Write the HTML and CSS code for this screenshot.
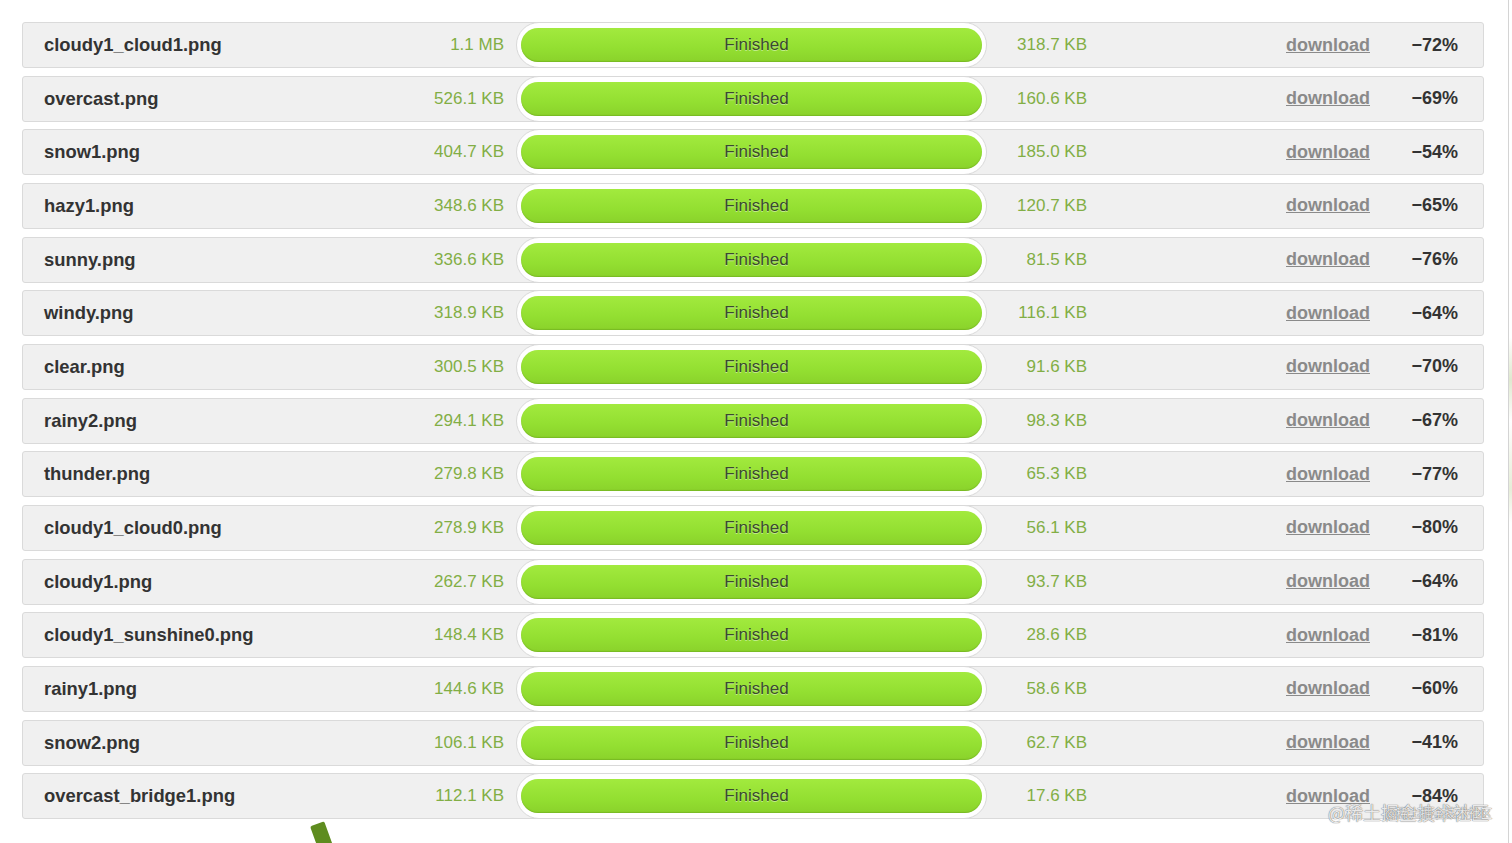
FILE: index.html
```html
<!DOCTYPE html>
<html lang="en">
<head>
    <meta charset="UTF-8">
    <meta name="viewport" content="width=device-width, initial-scale=1.0">
    <title>Compressed files</title>
    <link rel="stylesheet" href="styles.css">
</head>
<body>
<ul class="files">
    <li class="file">
        <span class="name">cloudy1_cloud1.png</span>
        <span class="size">1.1 MB</span>
        <span class="progress"><span class="bar">Finished</span></span>
        <span class="size">318.7 KB</span>
        <a class="download" href="#">download</a>
        <span class="saved">&minus;72%</span>
    </li>
    <li class="file">
        <span class="name">overcast.png</span>
        <span class="size">526.1 KB</span>
        <span class="progress"><span class="bar">Finished</span></span>
        <span class="size">160.6 KB</span>
        <a class="download" href="#">download</a>
        <span class="saved">&minus;69%</span>
    </li>
    <li class="file">
        <span class="name">snow1.png</span>
        <span class="size">404.7 KB</span>
        <span class="progress"><span class="bar">Finished</span></span>
        <span class="size">185.0 KB</span>
        <a class="download" href="#">download</a>
        <span class="saved">&minus;54%</span>
    </li>
    <li class="file">
        <span class="name">hazy1.png</span>
        <span class="size">348.6 KB</span>
        <span class="progress"><span class="bar">Finished</span></span>
        <span class="size">120.7 KB</span>
        <a class="download" href="#">download</a>
        <span class="saved">&minus;65%</span>
    </li>
    <li class="file">
        <span class="name">sunny.png</span>
        <span class="size">336.6 KB</span>
        <span class="progress"><span class="bar">Finished</span></span>
        <span class="size">81.5 KB</span>
        <a class="download" href="#">download</a>
        <span class="saved">&minus;76%</span>
    </li>
    <li class="file">
        <span class="name">windy.png</span>
        <span class="size">318.9 KB</span>
        <span class="progress"><span class="bar">Finished</span></span>
        <span class="size">116.1 KB</span>
        <a class="download" href="#">download</a>
        <span class="saved">&minus;64%</span>
    </li>
    <li class="file">
        <span class="name">clear.png</span>
        <span class="size">300.5 KB</span>
        <span class="progress"><span class="bar">Finished</span></span>
        <span class="size">91.6 KB</span>
        <a class="download" href="#">download</a>
        <span class="saved">&minus;70%</span>
    </li>
    <li class="file">
        <span class="name">rainy2.png</span>
        <span class="size">294.1 KB</span>
        <span class="progress"><span class="bar">Finished</span></span>
        <span class="size">98.3 KB</span>
        <a class="download" href="#">download</a>
        <span class="saved">&minus;67%</span>
    </li>
    <li class="file">
        <span class="name">thunder.png</span>
        <span class="size">279.8 KB</span>
        <span class="progress"><span class="bar">Finished</span></span>
        <span class="size">65.3 KB</span>
        <a class="download" href="#">download</a>
        <span class="saved">&minus;77%</span>
    </li>
    <li class="file">
        <span class="name">cloudy1_cloud0.png</span>
        <span class="size">278.9 KB</span>
        <span class="progress"><span class="bar">Finished</span></span>
        <span class="size">56.1 KB</span>
        <a class="download" href="#">download</a>
        <span class="saved">&minus;80%</span>
    </li>
    <li class="file">
        <span class="name">cloudy1.png</span>
        <span class="size">262.7 KB</span>
        <span class="progress"><span class="bar">Finished</span></span>
        <span class="size">93.7 KB</span>
        <a class="download" href="#">download</a>
        <span class="saved">&minus;64%</span>
    </li>
    <li class="file">
        <span class="name">cloudy1_sunshine0.png</span>
        <span class="size">148.4 KB</span>
        <span class="progress"><span class="bar">Finished</span></span>
        <span class="size">28.6 KB</span>
        <a class="download" href="#">download</a>
        <span class="saved">&minus;81%</span>
    </li>
    <li class="file">
        <span class="name">rainy1.png</span>
        <span class="size">144.6 KB</span>
        <span class="progress"><span class="bar">Finished</span></span>
        <span class="size">58.6 KB</span>
        <a class="download" href="#">download</a>
        <span class="saved">&minus;60%</span>
    </li>
    <li class="file">
        <span class="name">snow2.png</span>
        <span class="size">106.1 KB</span>
        <span class="progress"><span class="bar">Finished</span></span>
        <span class="size">62.7 KB</span>
        <a class="download" href="#">download</a>
        <span class="saved">&minus;41%</span>
    </li>
    <li class="file">
        <span class="name">overcast_bridge1.png</span>
        <span class="size">112.1 KB</span>
        <span class="progress"><span class="bar">Finished</span></span>
        <span class="size">17.6 KB</span>
        <a class="download" href="#">download</a>
        <span class="saved">&minus;84%</span>
    </li>
</ul>

<div class="panda-ear"></div>
<div class="edge"></div>
<div class="watermark">@稀土掘金技术社区<span class="watermark-small">@稀土掘金技术社区</span></div>
</body>
</html>
```

FILE: styles.css
```css
body {
    font-family: "Liberation Sans", Arial, sans-serif;
    margin: 0;
    padding: 0;
    background-color: #fff;
    color: #333;
    overflow: hidden;
}
.files {
    list-style: none;
    margin: 0;
    padding: 22px 0 0 22px;
    width: 1462px;
}
.file {
    box-sizing: border-box;
    height: 46px;
    margin-bottom: 7.66px;
    padding: 0 24px 0 21px;
    display: grid;
    grid-template-columns: 300px 160px 483px 100px 283px 88px;
    align-items: center;
    background-color: #f0f0f0;
    border: 1px solid #dadada;
    border-radius: 3px;
}
.name {
    font-size: 18.4px;
    font-weight: bold;
    color: #333;
    white-space: nowrap;
}
.size {
    font-size: 17px;
    color: #82ae45;
    text-align: right;
    white-space: nowrap;
}
.progress {
    justify-self: end;
    box-sizing: border-box;
    width: 471px;
    height: 46px;
    margin: -1px 0;
    padding: 5px 4px;
    background-color: #fff;
    border: 1px solid #d9d9d9;
    border-radius: 23px;
}
.bar {
    display: block;
    box-sizing: border-box;
    height: 34px;
    line-height: 34px;
    padding-left: 10px;
    text-align: center;
    font-size: 17px;
    color: #3a4a2e;
    text-shadow: 0 1px 0 rgba(255, 255, 255, 0.45);
    background: linear-gradient(#a2ea3e, #93df31 60%, #8ad22b);
    border-radius: 17px;
    box-shadow: inset 0 -1px 1px rgba(90, 140, 20, 0.35);
}
.download {
    justify-self: end;
    font-size: 18px;
    font-weight: bold;
    color: #8a8a8a;
    text-decoration: underline;
}
.saved {
    font-size: 18px;
    font-weight: bold;
    text-align: right;
    color: #333;
}
.panda-ear {
    position: absolute;
    left: 314px;
    top: 823px;
    width: 15px;
    height: 26px;
    background-color: #5e8c1f;
    border-radius: 2px;
    transform: rotate(-20deg);
}
.edge {
    position: absolute;
    top: 0;
    right: 0;
    width: 3px;
    height: 843px;
    border-left: 1px solid #d4d4d4;
    background: linear-gradient(#fff 40%, #dfe8cf 45%, #fff 50%, #e6edd8 58%, #fff 62%);
}
.watermark {
    position: absolute;
    left: 1328px;
    top: 800px;
    font-family: "Noto Sans CJK SC", sans-serif;
    font-size: 18px;
    line-height: 24px;
    color: rgba(255, 255, 255, 0.85);
    text-shadow: 0 0 1px #777, 0 0 1px #777;
    white-space: nowrap;
}
.watermark-small {
    position: absolute;
    left: 57px;
    top: 1px;
    font-size: 12px;
}
```
